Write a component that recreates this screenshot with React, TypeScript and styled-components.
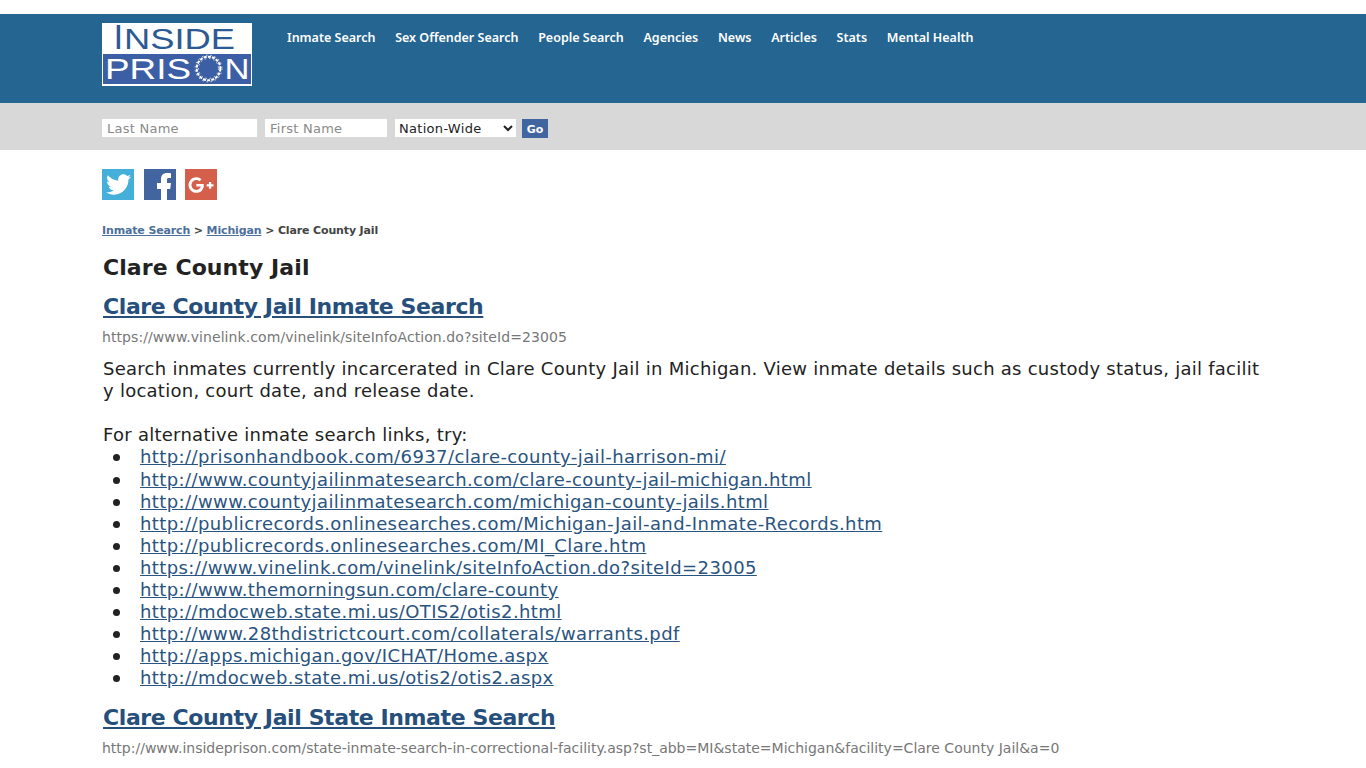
import * as React from 'react';
import styled, { createGlobalStyle } from 'styled-components';
import { FaGooglePlusG, FaTwitter } from 'react-icons/fa';

const GlobalStyle = createGlobalStyle`
  html, body {
    margin: 0;
    padding: 0;
    background: #ffffff;
    font-family: "DejaVu Sans", Verdana, sans-serif;
    color: #222222;
  }
`;

const Page = styled.div`
  height: 768px;
  overflow: hidden;
  padding-top: 14px;
  box-sizing: border-box;
`;

const Header = styled.header`
  display: flex;
  align-items: flex-start;
  height: 89px;
  padding: 9px 0 0 102px;
  box-sizing: border-box;
  background: #256591;
`;

const Logo = styled.a`
  display: block;
  flex: none;
  width: 150px;
  height: 63px;

  svg {
    display: block;
    overflow: visible;
  }

  text {
    font-family: "Liberation Sans", Arial, sans-serif;
  }
`;

const Nav = styled.nav`
  display: flex;
  gap: 19.7px;
  margin-left: 35px;
  padding-top: 7px;
`;

const NavLink = styled.a`
  color: #ffffff;
  font-family: Tahoma, "Noto Sans", sans-serif;
  font-size: 12.5px;
  font-weight: 600;
  line-height: 15px;
  text-decoration: none;
  white-space: nowrap;
`;

const SearchBar = styled.form`
  display: flex;
  align-items: flex-start;
  height: 47px;
  padding: 16px 0 0 102px;
  box-sizing: border-box;
  background: #d8d8d8;
`;

const TextField = styled.input<{ $width: number }>`
  width: ${props => props.$width}px;
  height: 18px;
  margin: 0 8px 0 0;
  padding: 0 5px;
  box-sizing: border-box;
  border: 0;
  border-radius: 0;
  background: #ffffff;
  font-family: "DejaVu Sans", sans-serif;
  font-size: 13px;
  letter-spacing: 0.25px;

  &::placeholder {
    color: #8a8a8a;
    opacity: 1;
  }
`;

const SelectField = styled.select`
  width: 121px;
  height: 18px;
  margin: 0 6px 0 0;
  padding: 0;
  border: 0;
  border-radius: 0;
  background: #ffffff;
  color: #222222;
  font-family: "DejaVu Sans", sans-serif;
  font-size: 13px;
  letter-spacing: 0.3px;
`;

const GoButton = styled.button`
  width: 26px;
  height: 19px;
  padding: 1px 0 0;
  border: 0;
  background: #41659f;
  color: #ffffff;
  font-family: "DejaVu Sans", sans-serif;
  font-size: 11px;
  font-weight: 700;
`;

const Content = styled.main`
  width: 1162px;
  margin-left: 102px;
`;

const Social = styled.div`
  display: flex;
  padding-top: 19px;
`;

const SocialLink = styled.a<{ $bg: string; $gap: number }>`
  display: flex;
  align-items: center;
  justify-content: center;
  width: 32px;
  height: 31px;
  margin-right: ${props => props.$gap}px;
  background: ${props => props.$bg};
  color: #ffffff;
`;

const Crumbs = styled.div`
  margin-top: 24px;
  color: #444444;
  font-size: 11px;
  font-weight: 700;
  line-height: 14px;
  letter-spacing: -0.14px;

  a {
    color: #4d6f9c;
  }
`;

const PageTitle = styled.h1`
  margin: 16px 0 0;
  padding-left: 1px;
  color: #222222;
  font-size: 22px;
  font-weight: 700;
  line-height: 27px;
  letter-spacing: 0.08px;
`;

const ResultTitle = styled.h2<{ $top: number }>`
  margin: ${props => props.$top}px 0 0;
  padding-left: 1px;
  font-size: 22px;
  font-weight: 700;
  line-height: 27px;
  letter-spacing: -0.4px;

  a {
    color: #264f7c;
  }
`;

const SourceUrl = styled.div<{ $spacing?: number }>`
  margin-top: 9px;
  color: #777777;
  font-size: 14px;
  line-height: 17px;
  letter-spacing: ${props => props.$spacing || 0}px;
  white-space: nowrap;
`;

const Description = styled.div`
  margin-top: 12px;
  padding-left: 1px;
  color: #222222;
  font-size: 18px;
  line-height: 22px;
  letter-spacing: 0.26px;
  word-break: break-all;
`;

const LinkList = styled.ul`
  display: flex;
  flex-direction: column;
  margin: 0;
  padding: 0;
  list-style: none;
  font-size: 18px;
  line-height: 22px;
  letter-spacing: 0.4px;

  a {
    color: #2a5480;
  }
`;

const LinkRow = styled.li`
  display: flex;
  align-items: center;
  height: 22px;
  padding-left: 11px;

  &:first-child {
    height: 23px;
    padding-bottom: 1px;
    box-sizing: border-box;
  }

  &::before {
    content: '';
    flex: none;
    width: 7px;
    height: 7px;
    margin-right: 20px;
    border-radius: 50%;
    background: #222222;
  }
`;

const links = [
  'http://prisonhandbook.com/6937/clare-county-jail-harrison-mi/',
  'http://www.countyjailinmatesearch.com/clare-county-jail-michigan.html',
  'http://www.countyjailinmatesearch.com/michigan-county-jails.html',
  'http://publicrecords.onlinesearches.com/Michigan-Jail-and-Inmate-Records.htm',
  'http://publicrecords.onlinesearches.com/MI_Clare.htm',
  'https://www.vinelink.com/vinelink/siteInfoAction.do?siteId=23005',
  'http://www.themorningsun.com/clare-county',
  'http://mdocweb.state.mi.us/OTIS2/otis2.html',
  'http://www.28thdistrictcourt.com/collaterals/warrants.pdf',
  'http://apps.michigan.gov/ICHAT/Home.aspx',
  'http://mdocweb.state.mi.us/otis2/otis2.aspx',
];

const navItems = [
  'Inmate Search',
  'Sex Offender Search',
  'People Search',
  'Agencies',
  'News',
  'Articles',
  'Stats',
  'Mental Health',
];

const LogoMark = () => (
  <svg width="150" height="63" viewBox="0 0 150 63" aria-label="Inside Prison">
    <rect width="150" height="63" fill="#ffffff" />
    <rect x="1" y="31" width="148" height="30" fill="#3c5ea4" />
    <text x="11.500" y="25.500" fontSize="35" fill="#2c5a94">I</text>
    <text x="22" y="26" fontSize="29" fill="#2c5a94" textLength="111" lengthAdjust="spacingAndGlyphs">NSIDE</text>
    <text x="3" y="56" fontSize="29" fill="#ffffff" textLength="86" lengthAdjust="spacingAndGlyphs">PRIS</text>
    <text x="122.500" y="56" fontSize="29" fill="#ffffff" textLength="25" lengthAdjust="spacingAndGlyphs">N</text>
    <circle cx="106.500" cy="45.500" r="11.800" fill="none" stroke="#ffffff" strokeWidth="2" strokeDasharray="3 1.200" />
    <circle cx="106.500" cy="45.500" r="13.400" fill="none" stroke="#ffffff" strokeWidth="0.8" strokeDasharray="1.500 2.800" />
    <circle cx="106.500" cy="45.500" r="10" fill="none" stroke="#ffffff" strokeWidth="0.8" strokeDasharray="1.500 2.800" />
  </svg>
);

const FacebookIcon = () => (
  <svg width="32" height="31" viewBox="0 0 32 31" fill="#ffffff" aria-hidden="true">
    <path d="M17 31V20h-4v-6h4V10C17 6 19.500 4 23 4c1.600 0 3 .1 4 .2V9h-2.600C23 9 23 10 23 11v3h4l-.8 6H23v11z" />
  </svg>
);

export default function App() {
  return (
    <>
      <GlobalStyle />
      <Page>
        <Header>
          <Logo href="#">
            <LogoMark />
          </Logo>
          <Nav>
            {navItems.map(item => (
              <NavLink key={item} href="#">
                {item}
              </NavLink>
            ))}
          </Nav>
        </Header>
        <SearchBar>
          <TextField $width={155} placeholder="Last Name" />
          <TextField $width={122} placeholder="First Name" />
          <SelectField defaultValue="Nation-Wide">
            <option>Nation-Wide</option>
          </SelectField>
          <GoButton type="button">Go</GoButton>
        </SearchBar>
        <Content>
          <Social>
            <SocialLink href="#" $bg="#44afd9" $gap={10}>
              <FaTwitter size={25} />
            </SocialLink>
            <SocialLink href="#" $bg="#43659f" $gap={9}>
              <FacebookIcon />
            </SocialLink>
            <SocialLink href="#" $bg="#d4604c" $gap={0}>
              <FaGooglePlusG size={26} />
            </SocialLink>
          </Social>
          <Crumbs>
            <a href="#">Inmate Search</a> &gt; <a href="#">Michigan</a> &gt; Clare County Jail
          </Crumbs>
          <PageTitle>Clare County Jail</PageTitle>
          <ResultTitle $top={12}>
            <a href="#">Clare County Jail Inmate Search</a>
          </ResultTitle>
          <SourceUrl $spacing={0.08}>https://www.vinelink.com/vinelink/siteInfoAction.do?siteId=23005</SourceUrl>
          <Description>
            Search inmates currently incarcerated in Clare County Jail in Michigan. View inmate details such as custody status, jail facility location, court date, and release date.
            <br />
            <br />
            For alternative inmate search links, try:
          </Description>
          <LinkList>
            {links.map(link => (
              <LinkRow key={link}>
                <a href="#">{link}</a>
              </LinkRow>
            ))}
          </LinkList>
          <ResultTitle $top={15}>
            <a href="#">Clare County Jail State Inmate Search</a>
          </ResultTitle>
          <SourceUrl>http://www.insideprison.com/state-inmate-search-in-correctional-facility.asp?st_abb=MI&amp;state=Michigan&amp;facility=Clare County Jail&amp;a=0</SourceUrl>
        </Content>
      </Page>
    </>
  );
}
